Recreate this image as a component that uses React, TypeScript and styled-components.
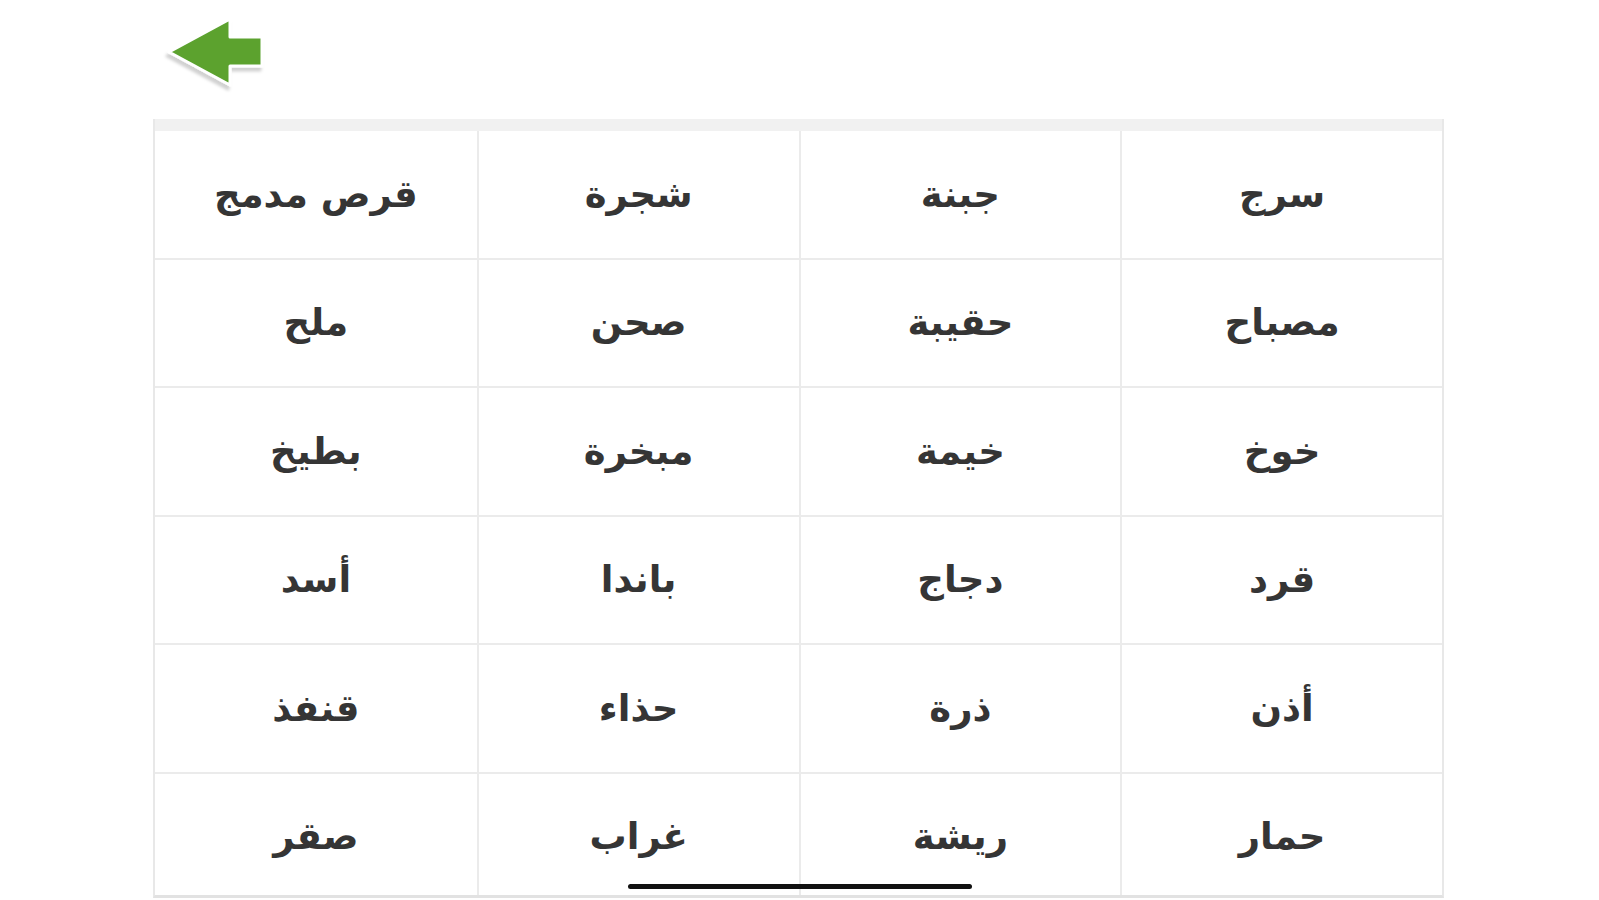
import styled, { createGlobalStyle } from "styled-components";

const GlobalStyle = createGlobalStyle`
  html, body {
    margin: 0;
    padding: 0;
    background: #ffffff;
    overflow: hidden;
  }
  body {
    font-family: "DejaVu Sans", "Noto Sans", sans-serif;
  }
`;

const Page = styled.div`
  position: relative;
  width: 1599px;
  height: 900px;
  overflow: hidden;
`;

const TopBar = styled.div`
  height: 119px;
  padding: 12px 0 0 160px;
  box-sizing: border-box;
`;

const BackButton = styled.button`
  border: none;
  background: none;
  padding: 0;
  cursor: pointer;
  display: block;
`;

const Table = styled.div`
  margin-left: 153px;
  width: 1291px;
  height: 779px;
  overflow: hidden;
  border-left: 2px solid #e8e8e8;
  border-right: 2px solid #e8e8e8;
  border-bottom: 3px solid #e2e2e2;
  box-sizing: border-box;
`;

const HeaderStrip = styled.div`
  height: 12px;
  background: #f1f1f1;
`;

const Grid = styled.div`
  direction: rtl;
  display: grid;
  grid-template-columns: repeat(4, 1fr);
  grid-auto-rows: 128.5px;
`;

const Cell = styled.div<{ $edge: boolean }>`
  display: flex;
  align-items: center;
  justify-content: center;
  border-bottom: 2px solid #ebebeb;
  border-left: ${(p) => (p.$edge ? "none" : "2px solid #ebebeb")};
  font-size: 37px;
  font-weight: bold;
  color: #353535;
  box-sizing: border-box;
`;

const HomeIndicator = styled.div`
  position: absolute;
  left: 628px;
  bottom: 11px;
  width: 344px;
  height: 5px;
  border-radius: 3px;
  background: #111;
`;

const WORDS = [
  ["سرج", "جبنة", "شجرة", "قرص مدمج"],
  ["مصباح", "حقيبة", "صحن", "ملح"],
  ["خوخ", "خيمة", "مبخرة", "بطيخ"],
  ["قرد", "دجاج", "باندا", "أسد"],
  ["أذن", "ذرة", "حذاء", "قنفذ"],
  ["حمار", "ريشة", "غراب", "صقر"],
];

const BackArrow = () => (
  <svg width="110" height="82" viewBox="0 0 110 82">
    <defs>
      <filter id="shade" x="-20%" y="-20%" width="140%" height="150%">
        <feDropShadow dx="-2" dy="4" stdDeviation="1.5" floodColor="#000" floodOpacity="0.18" />
      </filter>
    </defs>
    <polygon
      points="9,40 70,7 70,25 102,25 102,54 70,54 70,73"
      fill="#5ba22f"
      stroke="#ffffff"
      strokeWidth="3"
      strokeLinejoin="round"
      filter="url(#shade)"
    />
  </svg>
);

export default function App() {
  return (
    <Page>
      <GlobalStyle />
      <TopBar>
        <BackButton aria-label="back">
          <BackArrow />
        </BackButton>
      </TopBar>
      <Table>
        <HeaderStrip />
        <Grid>
          {WORDS.flatMap((row, r) =>
            row.map((word, c) => (
              <Cell key={`${r}-${c}`} $edge={c === 3}>
                {word}
              </Cell>
            ))
          )}
        </Grid>
      </Table>
      <HomeIndicator />
    </Page>
  );
}
